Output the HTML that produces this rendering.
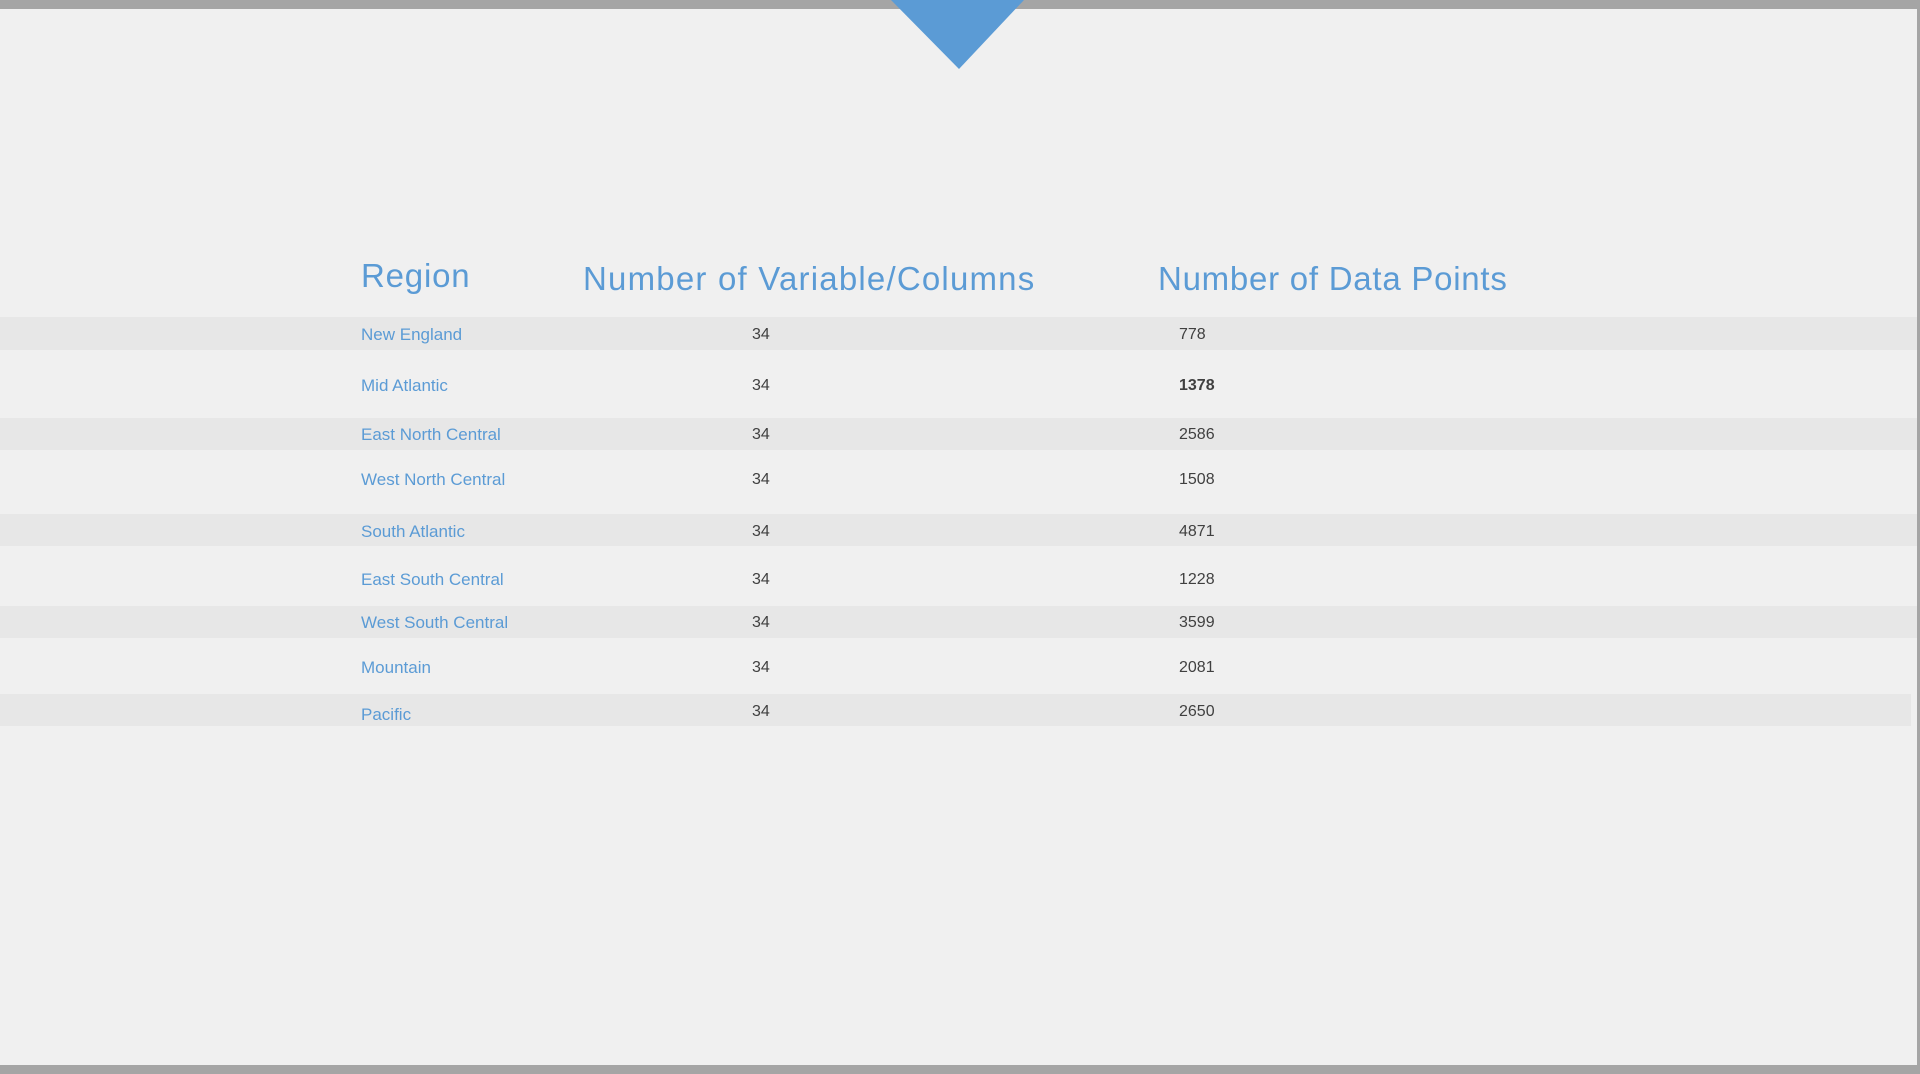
<!DOCTYPE html>
<html><head><meta charset="utf-8"><style>
html,body{margin:0;padding:0}
body{width:1920px;height:1074px;background:#f0f0f0;position:relative;overflow:hidden;font-family:"Liberation Sans",sans-serif}
.bar{position:absolute;left:0;width:1920px;background:#a5a5a5}
.band{position:absolute;left:0;width:1917px;background:#e7e7e7}
.t{position:absolute;white-space:nowrap;line-height:1}
.h{color:#5b9bd5;font-size:33px}
.r{color:#5b9bd5;font-size:17px}
.n{color:#404040;font-size:16px}
</style></head><body>
<div class="bar" style="top:0;height:9px"></div>
<div class="bar" style="top:1065px;height:9px"></div>
<div style="position:absolute;left:1917px;top:0;width:3px;height:1074px;background:#a5a5a5"></div>
<svg style="position:absolute;left:0;top:0" width="1920" height="80"><polygon points="891,0 1024,0 959,69" fill="#5b9bd5"/></svg>

<div class="band" style="top:317px;height:33px"></div>
<div class="band" style="top:418px;height:32px"></div>
<div class="band" style="top:514px;height:32px"></div>
<div class="band" style="top:606px;height:32px"></div>
<div class="band" style="top:694px;height:32px;width:1911px"></div>

<div class="t h" style="left:361px;top:259px;letter-spacing:0.8px">Region</div>
<div class="t h" style="left:583px;top:262px;letter-spacing:1.2px">Number of Variable/Columns</div>
<div class="t h" style="left:1158px;top:262px;letter-spacing:0.75px">Number of Data Points</div>

<div class="t r" style="left:361px;top:326px">New England</div>
<div class="t r" style="left:361px;top:377px">Mid Atlantic</div>
<div class="t r" style="left:361px;top:426px">East North Central</div>
<div class="t r" style="left:361px;top:471px">West North Central</div>
<div class="t r" style="left:361px;top:523px">South Atlantic</div>
<div class="t r" style="left:361px;top:571px">East South Central</div>
<div class="t r" style="left:361px;top:614px">West South Central</div>
<div class="t r" style="left:361px;top:659px">Mountain</div>
<div class="t r" style="left:361px;top:706px">Pacific</div>

<div class="t n" style="left:752px;top:327px">34</div>
<div class="t n" style="left:752px;top:378px">34</div>
<div class="t n" style="left:752px;top:427px">34</div>
<div class="t n" style="left:752px;top:472px">34</div>
<div class="t n" style="left:752px;top:524px">34</div>
<div class="t n" style="left:752px;top:572px">34</div>
<div class="t n" style="left:752px;top:615px">34</div>
<div class="t n" style="left:752px;top:660px">34</div>
<div class="t n" style="left:752px;top:704px">34</div>

<div class="t n" style="left:1179px;top:327px">778</div>
<div class="t n" style="left:1179px;top:378px;font-weight:bold">1378</div>
<div class="t n" style="left:1179px;top:427px">2586</div>
<div class="t n" style="left:1179px;top:472px">1508</div>
<div class="t n" style="left:1179px;top:524px">4871</div>
<div class="t n" style="left:1179px;top:572px">1228</div>
<div class="t n" style="left:1179px;top:615px">3599</div>
<div class="t n" style="left:1179px;top:660px">2081</div>
<div class="t n" style="left:1179px;top:704px">2650</div>
</body></html>
